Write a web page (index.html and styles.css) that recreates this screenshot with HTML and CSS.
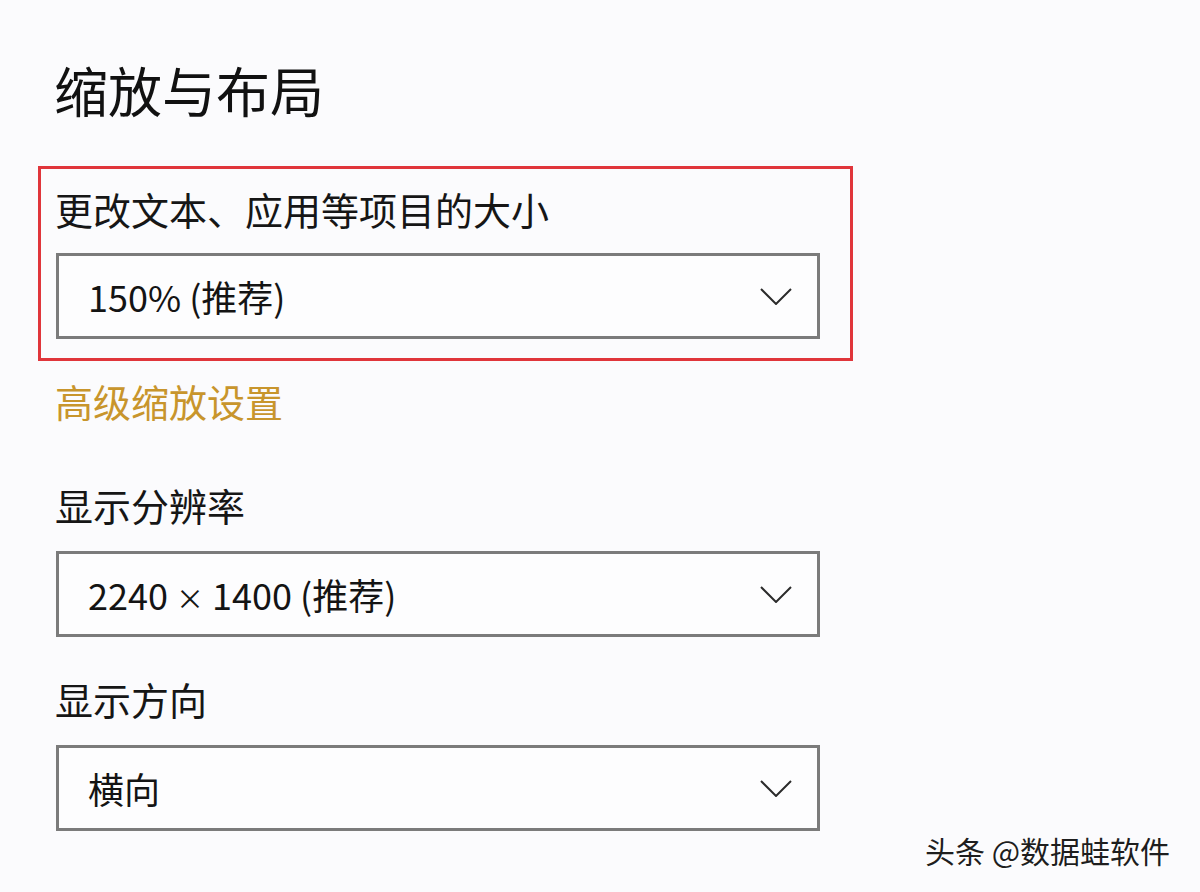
FILE: index.html
```html
<!DOCTYPE html>
<html lang="zh">
<head>
<meta charset="utf-8">
<link rel="stylesheet" href="styles.css">
</head>
<body>
<main class="page">
  <h1 class="title">缩放与布局</h1>
  <section class="highlight">
    <div class="label">更改文本、应用等项目的大小</div>
    <div class="select">
      <span class="value">150% (推荐)</span>
      <svg class="chev" width="32" height="17" viewBox="0 0 32 17"><path d="M1 1 L16 16 L31 1" fill="none" stroke="#2b2b2b" stroke-width="2"/></svg>
    </div>
  </section>
  <div class="link">高级缩放设置</div>
  <div class="label label-res">显示分辨率</div>
  <div class="select">
    <span class="value">2240 <span class="times">×</span> 1400 (推荐)</span>
    <svg class="chev" width="32" height="17" viewBox="0 0 32 17"><path d="M1 1 L16 16 L31 1" fill="none" stroke="#2b2b2b" stroke-width="2"/></svg>
  </div>
  <div class="label label-dir">显示方向</div>
  <div class="select">
    <span class="value">横向</span>
    <svg class="chev" width="32" height="17" viewBox="0 0 32 17"><path d="M1 1 L16 16 L31 1" fill="none" stroke="#2b2b2b" stroke-width="2"/></svg>
  </div>
</main>
<div class="watermark">头条 @数据蛙软件</div>
</body>
</html>
```
FILE: styles.css
```css
* { box-sizing: border-box; }
html, body {
  margin: 0;
  padding: 0;
  width: 1200px;
  height: 892px;
  overflow: hidden;
  background: #fbfbfd;
  font-family: "Noto Sans CJK SC", "Noto Sans", sans-serif;
  color: #151515;
}
.page {
  padding: 63px 0 0 56px;
}
.title {
  margin: 0 0 0 -2px;
  font-size: 54px;
  font-weight: 400;
  line-height: 1;
  color: #111;
}
.highlight {
  margin: 49px 0 0 -18px;
  width: 815px;
  border: 3px solid #e0353b;
  padding: 21px 0 19px 15px;
}
.label {
  font-size: 38px;
  line-height: 1;
  margin-left: -1px;
  color: #161616;
}
.highlight .label { margin-bottom: 25px; }
.select {
  width: 764px;
  height: 86px;
  border: 3px solid #7b7b7b;
  background: #fdfdfe;
  display: flex;
  align-items: center;
  justify-content: space-between;
  padding: 0 25px 0 29px;
}
.value {
  font-size: 36px;
  line-height: 1;
  color: #141414;
}
.times {
  font-size: 28px;
}
.chev { display: block; }
.link {
  margin: 21px 0 0 -1px;
  font-size: 38px;
  line-height: 1;
  color: #c8952c;
}
.label-res { margin-top: 66px; margin-bottom: 27px; }
.label-dir { margin-top: 43px; margin-bottom: 27px; }
.watermark {
  position: absolute;
  left: 925px;
  top: 835px;
  font-size: 30px;
  line-height: 1;
  color: #1e1e1e;
  text-shadow: 1px 1px 0 #ffffff, -1px 0 0 #ffffff;
  white-space: nowrap;
}
```
